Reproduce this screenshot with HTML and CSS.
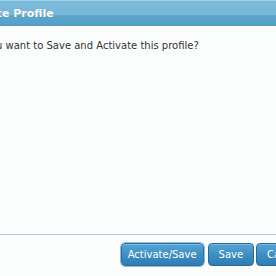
FILE: index.html
```html
<!DOCTYPE html>
<html>
<head>
<meta charset="utf-8">
<link rel="stylesheet" href="styles.css">
</head>
<body>
<div class="dialog">
  <div class="titlebar"><span class="title">Activate Profile</span></div>
  <div class="content">
    <p class="message">Do you want to Save and Activate this profile?</p>
  </div>
  <div class="footer">
    <button class="btn focused">Activate/Save</button>
    <button class="btn">Save</button>
    <button class="btn">Cancel</button>
  </div>
</div>
</body>
</html>
```

FILE: styles.css
```css
html, body {
  margin: 0;
  padding: 0;
  background: #fbfdfd;
  overflow: hidden;
}
.dialog {
  width: 360px;
  margin-left: -42px;
  font-family: "DejaVu Sans", Verdana, sans-serif;
  display: flex;
  flex-direction: column;
  height: 276px;
}
.titlebar {
  height: 24px;
  border-top: 1px solid #9ccfe8;
  border-bottom: 1px solid #4f9ac6;
  background: linear-gradient(to bottom, #7cbbda 0%, #78b7d8 56%, #5ba5cc 62%, #57a1c9 100%);
  display: flex;
  align-items: center;
  padding-left: 0;
}
.title {
  color: #fff;
  font-weight: bold;
  font-size: 11px;
  text-shadow: 0 0 1px rgba(60, 110, 150, 0.6);
}
.content {
  flex: 1;
  padding: 14px 9px 0 9px;
  border-bottom: 1px solid #b3c6dc;
}
.message {
  margin: 0;
  font-size: 10px;
  color: #333;
}
.footer {
  height: 41px;
  display: flex;
  justify-content: flex-end;
  align-items: flex-start;
  gap: 2px;
  padding: 8px 6px 0 0;
  box-sizing: border-box;
}
.btn {
  font-family: "DejaVu Sans", Verdana, sans-serif;
  font-size: 10px;
  color: #fff;
  height: 23px;
  padding: 0 10px;
  border: 1px solid #2b6a99;
  border-radius: 4px;
  background: linear-gradient(to bottom, #55a5d6 0%, #3f8fc4 50%, #2f7cb1 100%);
  box-shadow: inset 0 1px 0 rgba(255,255,255,0.25);
}
.btn.focused {
  padding: 0 6px;
  margin-right: 2px;
  border-color: #2f6ea0;
  outline: 1px solid #8fbde6;
  outline-offset: 0;
}
```
